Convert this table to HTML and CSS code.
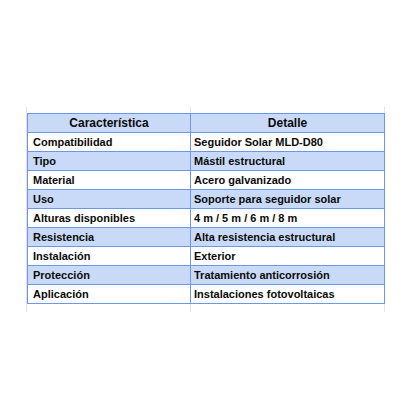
FILE: index.html
```html
<!DOCTYPE html>
<html lang="es">
<head>
<meta charset="utf-8">
<link rel="stylesheet" href="styles.css">
</head>
<body>
<div class="sheet">
  <table class="spec">
    <thead>
      <tr><th>Característica</th><th>Detalle</th></tr>
    </thead>
    <tbody>
      <tr class="w"><td>Compatibilidad</td><td>Seguidor Solar MLD-D80</td></tr>
      <tr class="b"><td>Tipo</td><td>Mástil estructural</td></tr>
      <tr class="w"><td>Material</td><td>Acero galvanizado</td></tr>
      <tr class="b"><td>Uso</td><td>Soporte para seguidor solar</td></tr>
      <tr class="w"><td>Alturas disponibles</td><td>4 m / 5 m / 6 m / 8 m</td></tr>
      <tr class="b"><td>Resistencia</td><td>Alta resistencia estructural</td></tr>
      <tr class="w"><td>Instalación</td><td>Exterior</td></tr>
      <tr class="b"><td>Protección</td><td>Tratamiento anticorrosión</td></tr>
      <tr class="w"><td>Aplicación</td><td>Instalaciones fotovoltaicas</td></tr>
    </tbody>
  </table>
</div>
</body>
</html>
```
FILE: styles.css
```css
html, body {
  margin: 0;
  padding: 0;
  background: #ffffff;
}
.sheet {
  margin: 107px 0 0 26px;
  width: 359px;
  padding: 6px 0 8px 1px;
  box-sizing: border-box;
  background-image:
    linear-gradient(#e4e4e4, #e4e4e4),
    linear-gradient(#e4e4e4, #e4e4e4),
    linear-gradient(#e4e4e4, #e4e4e4);
  background-size: 1px 100%, 1px 100%, 1px 100%;
  background-position: 0 0, 164px 0, 358px 0;
  background-repeat: no-repeat;
}
.spec {
  border-collapse: collapse;
  width: 358px;
  table-layout: fixed;
  font-family: "Liberation Sans", Arial, sans-serif;
  font-size: 11px;
  font-weight: bold;
  color: #0a0a0a;
}
.spec th:first-child, .spec td:first-child {
  width: 152px;
}
.spec th, .spec td {
  border: 1px solid #6d97e6;
  height: 18px;
  padding: 0 5px;
  line-height: 17px;
  white-space: nowrap;
}
.spec td:last-child {
  padding-left: 3px;
}
.spec th {
  background: #c9daf8;
  text-align: center;
  font-weight: bold;
  font-size: 12px;
}
.spec td {
  text-align: left;
}
.spec tr.w td {
  background: #ffffff;
}
.spec tr.b td {
  background: #c9daf8;
}
```
